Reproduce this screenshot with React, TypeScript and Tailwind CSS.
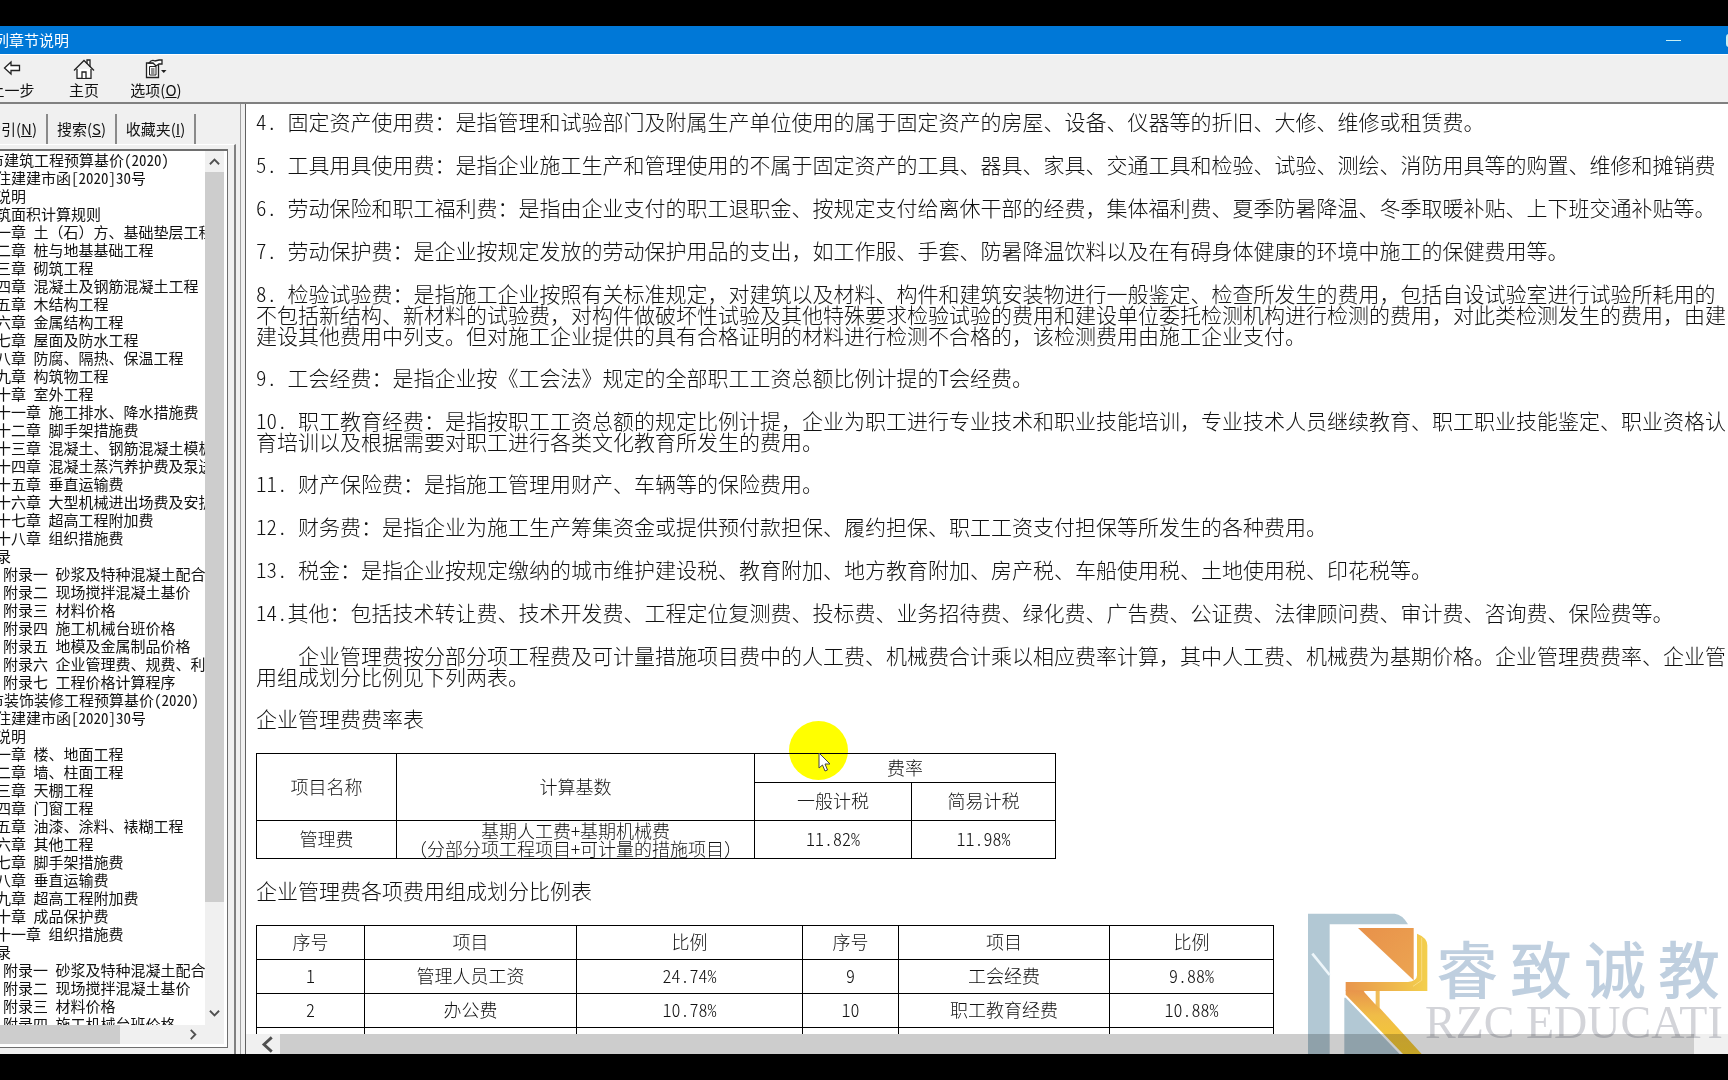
import React from 'react';

type TreeItem = { level: 0 | 1 | 2; text: string };

const tree: TreeItem[] = [
    { level: 0, text: '市建筑工程预算基价(2020)' },
    { level: 1, text: '住建建市函[2020]30号' },
    { level: 1, text: '说明' },
    { level: 1, text: '筑面积计算规则' },
    { level: 1, text: '一章 土（石）方、基础垫层工程' },
    { level: 1, text: '二章 桩与地基基础工程' },
    { level: 1, text: '三章 砌筑工程' },
    { level: 1, text: '四章 混凝土及钢筋混凝土工程' },
    { level: 1, text: '五章 木结构工程' },
    { level: 1, text: '六章 金属结构工程' },
    { level: 1, text: '七章 屋面及防水工程' },
    { level: 1, text: '八章 防腐、隔热、保温工程' },
    { level: 1, text: '九章 构筑物工程' },
    { level: 1, text: '十章 室外工程' },
    { level: 1, text: '十一章 施工排水、降水措施费' },
    { level: 1, text: '十二章 脚手架措施费' },
    { level: 1, text: '十三章 混凝土、钢筋混凝土模板' },
    { level: 1, text: '十四章 混凝土蒸汽养护费及泵送' },
    { level: 1, text: '十五章 垂直运输费' },
    { level: 1, text: '十六章 大型机械进出场费及安拆' },
    { level: 1, text: '十七章 超高工程附加费' },
    { level: 1, text: '十八章 组织措施费' },
    { level: 1, text: '录' },
    { level: 2, text: '附录一 砂浆及特种混凝土配合' },
    { level: 2, text: '附录二 现场搅拌混凝土基价' },
    { level: 2, text: '附录三 材料价格' },
    { level: 2, text: '附录四 施工机械台班价格' },
    { level: 2, text: '附录五 地模及金属制品价格' },
    { level: 2, text: '附录六 企业管理费、规费、利' },
    { level: 2, text: '附录七 工程价格计算程序' },
    { level: 0, text: '市装饰装修工程预算基价(2020)' },
    { level: 1, text: '住建建市函[2020]30号' },
    { level: 1, text: '说明' },
    { level: 1, text: '一章 楼、地面工程' },
    { level: 1, text: '二章 墙、柱面工程' },
    { level: 1, text: '三章 天棚工程' },
    { level: 1, text: '四章 门窗工程' },
    { level: 1, text: '五章 油漆、涂料、裱糊工程' },
    { level: 1, text: '六章 其他工程' },
    { level: 1, text: '七章 脚手架措施费' },
    { level: 1, text: '八章 垂直运输费' },
    { level: 1, text: '九章 超高工程附加费' },
    { level: 1, text: '十章 成品保护费' },
    { level: 1, text: '十一章 组织措施费' },
    { level: 1, text: '录' },
    { level: 2, text: '附录一 砂浆及特种混凝土配合' },
    { level: 2, text: '附录二 现场搅拌混凝土基价' },
    { level: 2, text: '附录三 材料价格' },
    { level: 2, text: '附录四 施工机械台班价格' },
];

const levelClass = ['-ml-[11px]', '-ml-[4px]', 'ml-[3px]'];

const paragraphs: string[][] = [
    ['4. 固定资产使用费：是指管理和试验部门及附属生产单位使用的属于固定资产的房屋、设备、仪器等的折旧、大修、维修或租赁费。'],
    ['5. 工具用具使用费：是指企业施工生产和管理使用的不属于固定资产的工具、器具、家具、交通工具和检验、试验、测绘、消防用具等的购置、维修和摊销费'],
    ['6. 劳动保险和职工福利费：是指由企业支付的职工退职金、按规定支付给离休干部的经费，集体福利费、夏季防暑降温、冬季取暖补贴、上下班交通补贴等。'],
    ['7. 劳动保护费：是企业按规定发放的劳动保护用品的支出，如工作服、手套、防暑降温饮料以及在有碍身体健康的环境中施工的保健费用等。'],
    [
        '8. 检验试验费：是指施工企业按照有关标准规定，对建筑以及材料、构件和建筑安装物进行一般鉴定、检查所发生的费用，包括自设试验室进行试验所耗用的',
        '不包括新结构、新材料的试验费，对构件做破坏性试验及其他特殊要求检验试验的费用和建设单位委托检测机构进行检测的费用，对此类检测发生的费用，由建',
        '建设其他费用中列支。但对施工企业提供的具有合格证明的材料进行检测不合格的，该检测费用由施工企业支付。',
    ],
    ['9. 工会经费：是指企业按《工会法》规定的全部职工工资总额比例计提的T会经费。'],
    [
        '10. 职工教育经费：是指按职工工资总额的规定比例计提，企业为职工进行专业技术和职业技能培训，专业技术人员继续教育、职工职业技能鉴定、职业资格认',
        '育培训以及根据需要对职工进行各类文化教育所发生的费用。',
    ],
    ['11. 财产保险费：是指施工管理用财产、车辆等的保险费用。'],
    ['12. 财务费：是指企业为施工生产筹集资金或提供预付款担保、履约担保、职工工资支付担保等所发生的各种费用。'],
    ['13. 税金：是指企业按规定缴纳的城市维护建设税、教育附加、地方教育附加、房产税、车船使用税、土地使用税、印花税等。'],
    ['14.其他：包括技术转让费、技术开发费、工程定位复测费、投标费、业务招待费、绿化费、广告费、公证费、法律顾问费、审计费、咨询费、保险费等。'],
    [
        '\u3000\u3000企业管理费按分部分项工程费及可计量措施项目费中的人工费、机械费合计乘以相应费率计算，其中人工费、机械费为基期价格。企业管理费费率、企业管',
        '用组成划分比例见下列两表。',
    ],
];

const ratioRows = [
    ['1', '管理人员工资', '24.74%', '9', '工会经费', '9.88%'],
    ['2', '办公费', '10.78%', '10', '职工教育经费', '10.88%'],
    ['', '', '', '', '', ''],
];

const cell = 'border border-black p-0 pb-[3px] text-center align-middle font-light';

// Latin runs take half-width glyphs, Chinese punctuation keeps its full width
const Mixed = ({ text }: { text: string }) => (
    <>
        {text.split(/([\x20-\x7e]+)/).map((run, i) =>
            i % 2 === 1 ? (
                <span key={i} className="whitespace-pre [font-feature-settings:'hwid']">{run}</span>
            ) : (
                run
            )
        )}
    </>
);

const Chevron = ({ d, size, width }: { d: string; size: number; width: number }) => (
    <svg width={size} height={size} viewBox="0 0 12 12" fill="none" stroke="#505050" strokeWidth={width}>
        <path d={d} />
    </svg>
);

const TitleBar = () => (
    <header className="flex h-7 shrink-0 items-center justify-between bg-[#0078d7] text-white">
        <h1 className="-ml-[6px] text-[15px] whitespace-nowrap">列章节说明</h1>
        <div className="-mr-[35px] flex h-full">
            <button aria-label="最小化" className="flex w-[60px] items-center justify-center">
                <span className="h-px w-[15px] bg-[#c8f0f4]" />
            </button>
            <button aria-label="最大化" className="flex w-[60px] items-center justify-center">
                <span className="h-[13px] w-[14px] rounded-[3px] border-2 border-[#c8f0f4]" />
            </button>
        </div>
    </header>
);

const Toolbar = () => (
    <nav className="flex h-12 shrink-0 border-t border-white bg-[#f0f0f0] text-[15px] leading-5">
        <button className="-ml-6 flex w-[72px] flex-col items-center gap-px pt-1 whitespace-nowrap">
            <svg width="18" height="20" viewBox="0 0 18 20" fill="#fff" stroke="#222" strokeWidth="1.3">
                <path d="M1.500 9 8 3v3.500h8.500v5H8V15z" />
            </svg>
            上一步
        </button>
        <button className="flex w-[72px] flex-col items-center gap-px pt-1">
            <svg width="22" height="20" viewBox="0 0 22 20" fill="#fff" stroke="#222" strokeWidth="1.300">
                <path d="M14 5V1h3v7" />
                <path d="M4 10v9.300h14V10" />
                <path d="M1 11.500 11 1.500l10 10" fill="none" />
                <path d="M9 19v-6h4v6" />
            </svg>
            主页
        </button>
        <button className="flex w-[72px] flex-col items-center gap-px pt-1">
            <svg width="22" height="20" viewBox="0 0 22 20" fill="#fff" stroke="#222" strokeWidth="1.300">
                <path d="M1.500 4h12v14.500h-12z" />
                <path d="M4.500 7.500h6.500v8.500H4.500zM6 10h3.500M6 12h3.500M6 14h3.500" strokeWidth="1" />
                <path d="M4 4c2-3 4-3 6-2l4-1h3v4h-3l-3 2-3-3z" />
                <path d="M16 11h5.500l-2.750 3z" fill="#222" stroke="none" />
            </svg>
            <span>选项(<u>O</u>)</span>
        </button>
    </nav>
);

const Sidebar = () => (
    <aside className="flex w-[236px] shrink-0 flex-col bg-[#f0f0f0] pt-[10px]">
        <div className="-ml-[23px] flex h-[30px] text-[15px] whitespace-nowrap">
            <button className="w-[71px] shrink-0 border-r-2 border-[#8a8a8a]">索引(<u>N</u>)</button>
            <button className="w-[69px] shrink-0 border-r-2 border-[#8a8a8a]">搜索(<u>S</u>)</button>
            <button className="w-[79px] shrink-0 border-r-2 border-[#8a8a8a]">收藏夹(<u>I</u>)</button>
        </div>
        <div className="flex min-h-0 flex-1 flex-col border-t border-r-2 border-t-white border-r-[#808080] pt-1 pr-[6px] pb-[6px]">
            <div className="flex min-h-0 flex-1 flex-col border-t-2 border-r border-b border-[#6e6e6e] bg-white pr-[3px] pb-[3px]">
                <div className="flex min-h-0 flex-1">
                    <ul className="min-w-0 flex-1 overflow-hidden">
                        {tree.map((item, i) => (
                            <li key={i} className="h-[18px] text-[15px] leading-[18px] whitespace-nowrap">
                                <a href="#" className={`block ${levelClass[item.level]}`}>
                                    <Mixed text={item.text} />
                                </a>
                            </li>
                        ))}
                    </ul>
                    <div className="flex w-[19px] shrink-0 flex-col bg-[#f0f0f0]">
                        <button aria-label="向上滚动" className="flex h-[21px] items-center justify-center">
                            <Chevron d="M1 9l5-5 5 5" size={11} width={2} />
                        </button>
                        <div className="flex-1">
                            <div className="h-[88%] bg-[#cdcdcd]" />
                        </div>
                        <button aria-label="向下滚动" className="flex h-[24px] items-center justify-center">
                            <Chevron d="M1 3l5 5 5-5" size={11} width={2} />
                        </button>
                    </div>
                </div>
                <div className="flex h-[19px] shrink-0 bg-[#f0f0f0]">
                    <div className="w-[120px] bg-[#cdcdcd]" />
                    <button aria-label="向右滚动" className="mr-[25px] ml-auto flex items-center">
                        <Chevron d="M3 1l5 5-5 5" size={11} width={2} />
                    </button>
                </div>
            </div>
        </div>
    </aside>
);

const RateTable = () => (
    <table className="w-[800px] table-fixed border-collapse text-[18px] leading-[18px]">
        <colgroup>
            <col className="w-[140px]" />
            <col className="w-[358px]" />
            <col className="w-[157px]" />
            <col className="w-[144px]" />
        </colgroup>
        <tbody>
            <tr className="h-[29px]">
                <th rowSpan={2} className={cell}>项目名称</th>
                <th rowSpan={2} className={cell}>计算基数</th>
                <th colSpan={2} className={cell}>费率</th>
            </tr>
            <tr className="h-[38px]">
                <th className={cell}>一般计税</th>
                <th className={cell}>简易计税</th>
            </tr>
            <tr className="h-[38px]">
                <td className={cell}>管理费</td>
                <td className="border border-black p-0 pb-px text-center align-top">
                    <Mixed text="基期人工费+基期机械费" />
                    <br />
                    <Mixed text="（分部分项工程项目+可计量的措施项目）" />
                </td>
                <td className={cell}><Mixed text="11.82%" /></td>
                <td className={cell}><Mixed text="11.98%" /></td>
            </tr>
        </tbody>
    </table>
);

const RatioTable = () => (
    <table className="w-[1018px] table-fixed border-collapse text-[18px] leading-[18px]">
        <colgroup>
            <col className="w-[108px]" />
            <col className="w-[212px]" />
            <col className="w-[226px]" />
            <col className="w-[96px]" />
            <col className="w-[211px]" />
            <col className="w-[164px]" />
        </colgroup>
        <thead>
            <tr className="h-[34px]">
                {['序号', '项目', '比例', '序号', '项目', '比例'].map((h, i) => (
                    <th key={i} className={cell}>{h}</th>
                ))}
            </tr>
        </thead>
        <tbody>
            {ratioRows.map((row, i) => (
                <tr key={i} className="h-[34px]">
                    {row.map((value, j) => (
                        <td key={j} className={cell}><Mixed text={value} /></td>
                    ))}
                </tr>
            ))}
        </tbody>
    </table>
);

const Pointer = () => (
    <>
        <div className="absolute top-[617px] left-[543px] size-[59px] rounded-full bg-[#ffff00] mix-blend-multiply" />
        <svg className="absolute top-[648px] left-[572px]" width="13" height="20" viewBox="0 0 13 20">
            <path d="M1 1v15l3.500-3 2.500 6 2.500-1-2.500-6H12z" fill="#fff" stroke="#444" />
        </svg>
    </>
);

const Watermark = () => (
    <div className="pointer-events-none absolute right-0 bottom-0 flex h-[141px] w-[420px] overflow-hidden mix-blend-multiply">
        <svg className="shrink-0" width="120" height="141" viewBox="175 98 360 423">
            <defs>
                <linearGradient id="fold" x1="0" y1="0" x2="1" y2="1">
                    <stop offset="0" stopColor="#e8914a" />
                    <stop offset="1" stopColor="#eca552" />
                </linearGradient>
                <linearGradient id="edge" x1="0" y1="0" x2="1" y2="0">
                    <stop offset="0" stopColor="#e8954c" />
                    <stop offset="1" stopColor="#f3cf4c" />
                </linearGradient>
                <linearGradient id="leg" x1="0" y1="0" x2="0" y2="1">
                    <stop offset="0" stopColor="#e8954c" />
                    <stop offset="0.4" stopColor="#f0bd48" />
                    <stop offset="1" stopColor="#f5cc30" />
                </linearGradient>
            </defs>
            <path d="M175 100H435Q458 102 475 132H240V521H175z" fill="#b2c8d4" />
            <path d="M188 220 240 284" stroke="#eef6fa" strokeWidth="8" />
            <path d="M325 143H492V300z" fill="url(#fold)" />
            <path d="M502 160Q533 172 533 195V332H288V305H475Q502 302 502 285z" fill="url(#edge)" />
            <path d="M516 172V300L490 318" stroke="#f9dc80" strokeWidth="3" fill="none" />
            <path d="M288 330H340L395 388 516 521H460L288 343z" fill="url(#leg)" />
            <path d="M343 334H378V373z" fill="#fff" />
            <path d="M378 332H390V384L378 373z" fill="#f0bd58" />
            <path d="M288 352 450 521H284V352z" fill="#b2c8d4" />
        </svg>
        <div className="flex flex-col pt-4 whitespace-nowrap">
            <div className="ml-2 flex gap-3 text-[62px] leading-[76px] font-medium text-[#bfcfdf]">
                <span>睿</span>
                <span>致</span>
                <span>诚</span>
                <span>教</span>
            </div>
            <div className="-ml-[3px] font-['Liberation_Serif',serif] text-[46px] leading-[36px] text-[#d3d4d9]">RZC EDUCATI</div>
        </div>
    </div>
);

const Content = () => (
    <main className="relative flex min-w-0 flex-1 flex-col border-l border-[#606060] bg-white">
        <article className="relative flex min-h-0 flex-1 flex-col gap-[22px] overflow-hidden pt-[7px] pl-[10px] text-[21px] leading-[21px] font-light whitespace-nowrap">
            {paragraphs.map((lines, i) => (
                <p key={i} className={lines.length > 1 ? '-mb-px' : ''}>
                    {lines.map((line) => (
                        <span key={line} className="block"><Mixed text={line} /></span>
                    ))}
                </p>
            ))}
            <h2>企业管理费费率表</h2>
            <div className="mt-[2px] -mb-px"><RateTable /></div>
            <h2>企业管理费各项费用组成划分比例表</h2>
            <div className="mt-[2px] -mb-px"><RatioTable /></div>
            <Pointer />
        </article>
        <div className="flex h-[20px] shrink-0 bg-[#f0f0f0]">
            <button aria-label="向左滚动" className="flex w-[34px] items-center justify-center pl-2">
                <Chevron d="M9 1L3.500 6 9 11" size={17} width={2} />
            </button>
            <div className="mr-[34px] flex-1 bg-[#cdcdcd]" />
        </div>
        <Watermark />
    </main>
);

const App = () => (
    <div className="flex h-screen flex-col overflow-hidden bg-black py-[26px] font-['Noto_Sans_CJK_SC',sans-serif] text-[#111]">
        <TitleBar />
        <Toolbar />
        <div className="flex min-h-0 flex-1 border-t-2 border-[#808080] bg-[#f0f0f0]">
            <Sidebar />
            <div className="mx-1 w-px shrink-0 bg-[#a0a0a0]" />
            <Content />
        </div>
    </div>
);

export default App;
